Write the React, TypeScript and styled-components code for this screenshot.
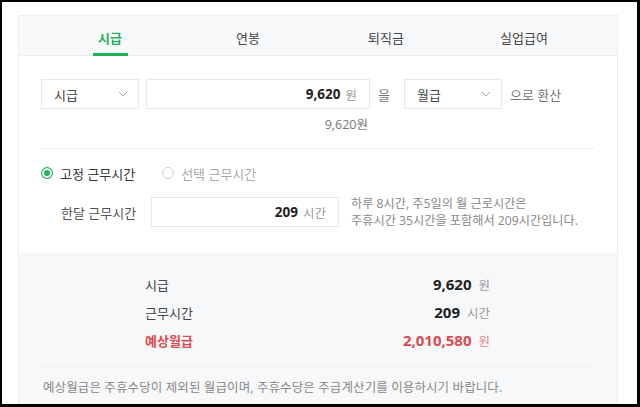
import { useState } from "react";
import styled, { createGlobalStyle } from "styled-components";

const GlobalStyle = createGlobalStyle`
  html, body {
    margin: 0;
    padding: 0;
    background: #ffffff;
  }
  * {
    box-sizing: border-box;
  }
`;

const GREEN = "#1fb25a";
const RED = "#db4a4f";

const Frame = styled.div`
  width: 640px;
  height: 407px;
  overflow: hidden;
  border: 2px solid #000;
  border-right-width: 3px;
  border-bottom-width: 3px;
  padding: 13px 0 0 16px;
  font-family: "Open Sans", "Noto Sans CJK KR", sans-serif;
  color: #333;
`;

const Card = styled.div`
  width: 600px;
  border: 1px solid #ebedf0;
  border-bottom: none;
  background: #fff;
`;

const TabBar = styled.div`
  display: flex;
  height: 40px;
  padding-left: 22px;
  background: #f8f9fa;
  border-bottom: 1px solid #eceef0;
`;

const Tab = styled.div<{ $active?: boolean }>`
  position: relative;
  width: 138px;
  text-align: center;
  font-size: 13px;
  line-height: 44px;
  color: ${(p) => (p.$active ? GREEN : "#444")};
  font-weight: ${(p) => (p.$active ? 700 : 400)};

  &::after {
    content: "";
    display: ${(p) => (p.$active ? "block" : "none")};
    position: absolute;
    left: 52px;
    bottom: -1px;
    width: 35px;
    height: 3px;
    background: ${GREEN};
  }
`;

const Body = styled.div`
  padding: 23px 22px 0 22px;
`;

const ConvertRow = styled.div`
  display: flex;
  align-items: center;
  height: 30px;
`;

const Select = styled.div`
  display: flex;
  align-items: center;
  justify-content: space-between;
  width: 98px;
  height: 30px;
  padding: 0 10px 0 12px;
  border: 1px solid #e6e8eb;
  font-size: 13px;
  color: #444;
`;

const AmountBox = styled.div<{ $width: number }>`
  display: flex;
  align-items: center;
  justify-content: flex-end;
  gap: 5px;
  width: ${(p) => p.$width}px;
  height: 30px;
  padding: 0 12px;
  border: 1px solid #e6e8eb;
`;

const AmountValue = styled.span`
  font-size: 13.5px;
  font-weight: 700;
  color: #222;
`;

const Unit = styled.span`
  font-size: 12.5px;
  color: #999;
`;

const Word = styled.span<{ $ml?: number; $mr?: number }>`
  margin-left: ${(p) => p.$ml ?? 0}px;
  margin-right: ${(p) => p.$mr ?? 0}px;
  font-size: 13px;
  color: #777;
`;

const Gap = styled.div<{ $w: number }>`
  width: ${(p) => p.$w}px;
  flex: none;
`;

const Preview = styled.div`
  width: 327px;
  margin-top: 7px;
  text-align: right;
  font-size: 12.5px;
  line-height: 18px;
  color: #777;
`;

const Divider = styled.hr<{ $mt: number; $width?: number }>`
  margin: ${(p) => p.$mt}px 0 0 0;
  width: ${(p) => (p.$width ? `${p.$width}px` : "auto")};
  border: none;
  border-top: 1px solid #eef0f2;
`;

const RadioRow = styled.div`
  display: flex;
  align-items: center;
  gap: 27px;
  margin-top: 15px;
  height: 18px;
`;

const RadioLabel = styled.label<{ $on?: boolean }>`
  display: flex;
  align-items: center;
  gap: 7px;
  font-size: 13px;
  color: ${(p) => (p.$on ? "#333" : "#aaa")};
  cursor: pointer;
`;

const RadioDot = styled.span<{ $on?: boolean }>`
  width: 12px;
  height: 12px;
  border-radius: 50%;
  border: 1px solid ${(p) => (p.$on ? GREEN : "#cfd2d6")};
  background: ${(p) => (p.$on ? GREEN : "#fff")};
  box-shadow: ${(p) => (p.$on ? "inset 0 0 0 2px #fff" : "none")};
  flex: none;
`;

const HoursRow = styled.div`
  display: flex;
  align-items: center;
  margin-top: 13px;
  padding-left: 20px;
`;

const HoursLabel = styled.div`
  width: 90px;
  font-size: 13px;
  color: #555;
`;

const HoursNote = styled.div`
  margin-left: 12px;
  font-size: 12.2px;
  line-height: 17px;
  color: #888;
`;

const Results = styled.div`
  margin-top: 24px;
  padding: 17px 22px 0 22px;
  background: #f7f8fa;
  height: 160px;
`;

const ResultRow = styled.div`
  display: flex;
  align-items: center;
  justify-content: space-between;
  width: 345px;
  height: 28px;
  margin-left: 104px;
`;

const ResultLabel = styled.span<{ $accent?: boolean }>`
  font-size: 13px;
  font-weight: ${(p) => (p.$accent ? 700 : 400)};
  color: ${(p) => (p.$accent ? RED : "#444")};
`;

const ResultValue = styled.span<{ $accent?: boolean }>`
  display: flex;
  align-items: baseline;
  gap: 7px;
  font-size: 15px;
  font-weight: 700;
  color: ${(p) => (p.$accent ? RED : "#222")};
`;

const ResultUnit = styled.span<{ $accent?: boolean }>`
  font-size: 12.5px;
  font-weight: 400;
  color: ${(p) => (p.$accent ? "#e08a8d" : "#999")};
`;

const Footnote = styled.p`
  margin: 12px 0 0 2px;
  font-size: 12.5px;
  line-height: 18px;
  letter-spacing: 0.1px;
  color: #888;
`;

const Chevron = () => (
  <svg width="10" height="6" viewBox="0 0 10 6" fill="none">
    <path d="M1 1l4 4 4-4" stroke="#a3a7ad" strokeWidth="1" />
  </svg>
);

const tabs = ["시급", "연봉", "퇴직금", "실업급여"];

const results = [
  { label: "시급", value: "9,620", unit: "원" },
  { label: "근무시간", value: "209", unit: "시간" },
  { label: "예상월급", value: "2,010,580", unit: "원", accent: true },
];

export default function App() {
  const [mode, setMode] = useState<"fixed" | "flex">("fixed");

  return (
    <>
      <GlobalStyle />
      <Frame>
        <Card>
          <TabBar>
            {tabs.map((t, i) => (
              <Tab key={t} $active={i === 0}>
                {t}
              </Tab>
            ))}
          </TabBar>
          <Body>
            <ConvertRow>
              <Select>
                시급
                <Chevron />
              </Select>
              <Gap $w={7} />
              <AmountBox $width={224}>
                <AmountValue>9,620</AmountValue>
                <Unit>원</Unit>
              </AmountBox>
              <Word $ml={8} $mr={14}>
                을
              </Word>
              <Select>
                월급
                <Chevron />
              </Select>
              <Word $ml={8}>으로 환산</Word>
            </ConvertRow>
            <Preview>9,620원</Preview>
            <Divider $mt={14} />
            <RadioRow>
              <RadioLabel $on={mode === "fixed"} onClick={() => setMode("fixed")}>
                <RadioDot $on={mode === "fixed"} />
                고정 근무시간
              </RadioLabel>
              <RadioLabel $on={mode === "flex"} onClick={() => setMode("flex")}>
                <RadioDot $on={mode === "flex"} />
                선택 근무시간
              </RadioLabel>
            </RadioRow>
            <HoursRow>
              <HoursLabel>한달 근무시간</HoursLabel>
              <AmountBox $width={188}>
                <AmountValue>209</AmountValue>
                <Unit>시간</Unit>
              </AmountBox>
              <HoursNote>
                하루 8시간, 주5일의 월 근로시간은
                <br />
                주휴시간 35시간을 포함해서 209시간입니다.
              </HoursNote>
            </HoursRow>
          </Body>
          <Results>
            {results.map((r) => (
              <ResultRow key={r.label}>
                <ResultLabel $accent={r.accent}>{r.label}</ResultLabel>
                <ResultValue $accent={r.accent}>
                  {r.value}
                  <ResultUnit $accent={r.accent}>{r.unit}</ResultUnit>
                </ResultValue>
              </ResultRow>
            ))}
            <Divider $mt={12} $width={553} />
            <Footnote>
              예상월급은 주휴수당이 제외된 월급이며, 주휴수당은 주급계산기를 이용하시기 바랍니다.
            </Footnote>
          </Results>
        </Card>
      </Frame>
    </>
  );
}
